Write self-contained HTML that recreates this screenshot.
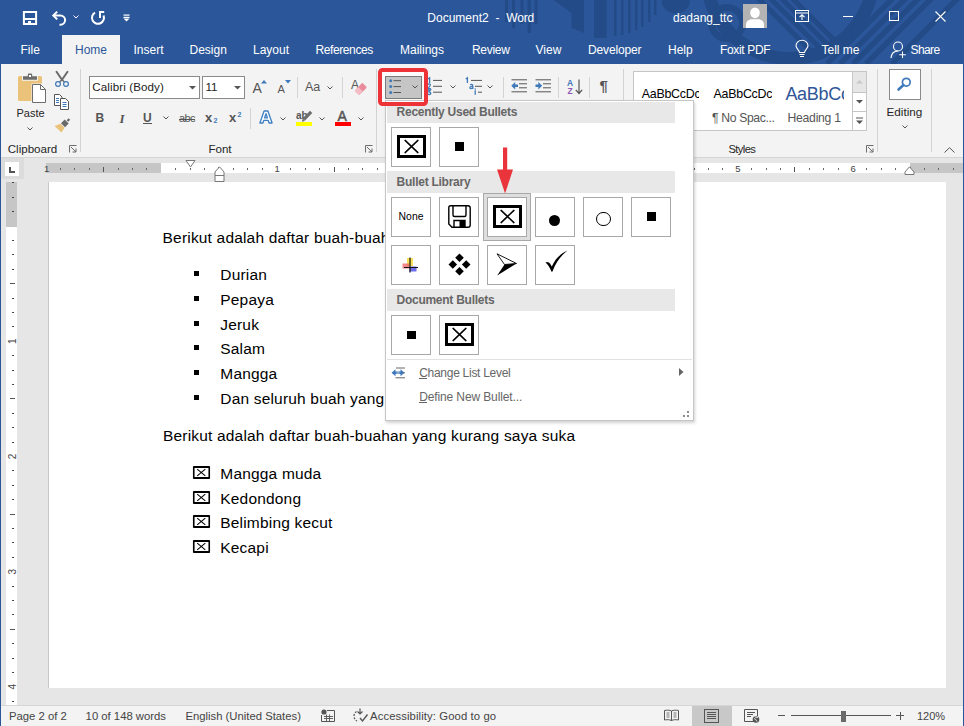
<!DOCTYPE html>
<html><head><meta charset="utf-8">
<style>
*{margin:0;padding:0;box-sizing:border-box}
html,body{width:964px;height:726px;overflow:hidden;background:#e6e6e6;font-family:"Liberation Sans",sans-serif;position:relative}
.a{position:absolute;white-space:nowrap;line-height:1}
svg{position:absolute;overflow:visible}
.tt{color:#fff;font-size:12px}
.rl{color:#262626;font-size:11.6px}
.st{color:#444;font-size:11.3px}
.doc{color:#000;font-size:15.5px;letter-spacing:0.18px}
.hd{color:#666;font-size:12px;font-weight:bold;letter-spacing:-0.26px;margin-top:0.1px}
.bx{width:16.4px;height:13px;border-top:2px solid #000;border-bottom:2px solid #000;border-left:1.6px solid #000;border-right:1.6px solid #000;background:#fff}
.bx::after{content:"";position:absolute;left:2.2px;top:1.1px;width:8px;height:7px;background:linear-gradient(to top right,transparent calc(50% - 0.6px),#000 calc(50% - 0.6px),#000 calc(50% + 0.6px),transparent calc(50% + 0.6px)),linear-gradient(to top left,transparent calc(50% - 0.6px),#000 calc(50% - 0.6px),#000 calc(50% + 0.6px),transparent calc(50% + 0.6px))}
.cell{position:absolute;width:40px;height:40px;border:1px solid #a8a8a8;background:#fff}
</style></head><body>
<!-- ============ TITLE BAR ============ -->
<div class="a" style="left:0;top:0;width:964px;height:64px;background:#2b579a"></div>
<svg style="left:0;top:0" width="964" height="64" viewBox="0 0 964 64">
 <defs>
  <clipPath id="cin"><circle cx="790" cy="-25" r="77"/></clipPath>
  <clipPath id="cout"><path d="M0 -200 H964 V64 H0 Z M880 -25 A90 90 0 1 0 700 -25 A90 90 0 1 0 880 -25 Z" clip-rule="evenodd"/></clipPath>
 </defs>
 <g fill="#234b88">
  <rect x="505" y="0" width="3" height="22"/><rect x="512" y="0" width="3" height="28"/><rect x="520.5" y="0" width="3" height="24"/><rect x="527.5" y="0" width="3.5" height="33"/><rect x="534.5" y="0" width="3" height="24"/>
  <polygon points="553.5,0 584,0 584,33 571.5,28 571.5,13"/>
  <rect x="594" y="0" width="12.7" height="38"/>
  <rect x="614" y="0" width="2.5" height="36"/><rect x="621" y="0" width="2.5" height="35"/><rect x="628" y="0" width="2.5" height="33"/><rect x="635" y="0" width="2.5" height="30"/><rect x="641" y="0" width="2.5" height="27"/><rect x="648" y="0" width="2.5" height="22"/><rect x="654" y="0" width="2.5" height="15"/>
  <path d="M661.5 0 A14.2 13.5 0 0 0 690 0 Z"/>
 </g>
 <g fill="none" stroke="#234b88">
  <circle cx="790" cy="-25" r="83.5" stroke-width="13"/>
  <circle cx="727" cy="23" r="15.5" stroke-width="7"/>
  <g clip-path="url(#cin)" stroke-width="5"><path d="M770 -2 L840 68 M781 -2 L851 68 M792 -2 L862 68 M758 -2 L828 68"/></g>
  <g clip-path="url(#cout)" stroke-width="5.5"><path d="M893 -2 L827 64 M906 -2 L840 64 M919 -2 L853 64 M932 -2 L866 64 M958 -2 L892 64"/></g>
 </g>
</svg>
<!-- QAT icons -->
<svg style="left:22px;top:10px" width="16" height="16" viewBox="0 0 16 16">
 <path d="M1.9 1.9 H14.1 V14.1 H1.9 Z" fill="none" stroke="#fff" stroke-width="2"/>
 <rect x="1" y="8" width="14" height="2" fill="#fff"/>
 <rect x="6" y="11" width="3" height="3.5" fill="#fff"/>
</svg>
<svg style="left:51px;top:10px" width="17" height="16" viewBox="0 0 17 16">
 <path d="M2.5 5.5 H9.5 A4.6 4.6 0 0 1 9.5 14.7 H8.5" fill="none" stroke="#fff" stroke-width="2"/>
 <path d="M6.2 1.6 L2.3 5.5 L6.2 9.4" fill="none" stroke="#fff" stroke-width="2"/>
</svg>
<svg style="left:73px;top:15px" width="6" height="4" viewBox="0 0 6 4"><path d="M0.5 0.5 L3 3 L5.5 0.5" fill="none" stroke="#fff" stroke-width="1"/></svg>
<svg style="left:90px;top:10px" width="16" height="16" viewBox="0 0 16 16">
 <path d="M5 2.6 A6 6 0 1 0 13.5 5.5" fill="none" stroke="#fff" stroke-width="2"/>
 <path d="M10 8 V2 H14.2" fill="none" stroke="#fff" stroke-width="2"/>
</svg>
<svg style="left:123px;top:14px" width="7" height="8" viewBox="0 0 7 8"><rect x="0.5" y="0.5" width="6" height="1.2" fill="#fff"/><rect x="0.5" y="2.8" width="6" height="1.2" fill="#fff"/><path d="M0.5 4.5 H6.5 L3.5 7.5 Z" fill="#fff"/></svg>

<div class="a tt" style="left:427.3px;top:12px">Document2</div><div class="a tt" style="left:495.5px;top:12px">-</div><div class="a tt" style="left:506.3px;top:12px;letter-spacing:-0.2px">Word</div>
<div class="a tt" style="left:673px;top:11.7px">dadang_ttc</div>
<!-- avatar -->
<div class="a" style="left:743px;top:4px;width:24px;height:24px;background:#b3b3b3;overflow:hidden">
 <svg style="left:0;top:0" width="24" height="24" viewBox="0 0 24 24"><ellipse cx="12" cy="8.8" rx="4.8" ry="5.4" fill="#fff"/><path d="M3 24 V21 C3 17.5 5.5 15.3 9 15.3 H15 C18.5 15.3 21 17.5 21 21 V24 Z" fill="#fff"/></svg>
</div>
<!-- window controls -->
<svg style="left:795px;top:10px" width="14" height="12" viewBox="0 0 14 12"><rect x="0.5" y="0.5" width="13" height="11" fill="none" stroke="#fff" stroke-width="1"/><path d="M0.5 3 H13.5" stroke="#fff" stroke-width="1"/><path d="M7 10 V5 M4.5 7.2 L7 4.8 L9.5 7.2" fill="none" stroke="#fff" stroke-width="1.1"/></svg>
<div class="a" style="left:843px;top:15.5px;width:10px;height:1px;background:#fff"></div>
<div class="a" style="left:889px;top:11px;width:10px;height:10px;border:1px solid #fff"></div>
<svg style="left:935px;top:11px" width="11" height="11" viewBox="0 0 11 11"><path d="M0.5 0.5 L10.5 10.5 M10.5 0.5 L0.5 10.5" stroke="#fff" stroke-width="1.1"/></svg>

<!-- ============ TABS ============ -->
<div class="a" style="left:62px;top:35px;width:58px;height:30px;background:#f3f3f3"></div>
<div class="a tt" style="left:20.5px;top:43.6px">File</div>
<div class="a tt" style="left:75px;top:43.6px;color:#2b579a">Home</div>
<div class="a tt" style="left:133.5px;top:43.6px">Insert</div>
<div class="a tt" style="left:189.5px;top:43.6px">Design</div>
<div class="a tt" style="left:253px;top:43.6px">Layout</div>
<div class="a tt" style="left:315.5px;top:43.6px;letter-spacing:-0.4px">References</div>
<div class="a tt" style="left:400px;top:43.6px">Mailings</div>
<div class="a tt" style="left:472px;top:43.6px;letter-spacing:-0.3px">Review</div>
<div class="a tt" style="left:535.5px;top:43.6px">View</div>
<div class="a tt" style="left:588px;top:43.6px;letter-spacing:-0.15px">Developer</div>
<div class="a tt" style="left:668px;top:43.6px">Help</div>
<div class="a tt" style="left:720px;top:43.6px;letter-spacing:-0.35px">Foxit PDF</div>
<svg style="left:795px;top:40px" width="14" height="19" viewBox="0 0 14 19"><path d="M4.5 12.5 C4.5 10 1 8.5 1 5.8 A6 5.5 0 0 1 13 5.8 C13 8.5 9.5 10 9.5 12.5 Z" fill="none" stroke="#fff" stroke-width="1.1"/><path d="M4.5 14.5 H9.5 M5 16.5 H9" stroke="#fff" stroke-width="1.1"/></svg>
<div class="a tt" style="left:821.5px;top:43.6px">Tell me</div>
<svg style="left:890px;top:41px" width="17" height="18" viewBox="0 0 17 18"><circle cx="8" cy="5.5" r="4.5" fill="none" stroke="#fff" stroke-width="1.1"/><path d="M1 17 C1.5 12 4 10 8 10" fill="none" stroke="#fff" stroke-width="1.1"/><path d="M12.5 10.5 V17 M9.2 13.8 H15.8" stroke="#fff" stroke-width="1.1"/></svg>
<div class="a tt" style="left:910.5px;top:43.6px;letter-spacing:-0.6px">Share</div>

<!-- window borders -->
<div class="a" style="left:0;top:64px;width:1px;height:662px;background:#2b579a"></div>
<div class="a" style="left:963px;top:64px;width:1px;height:662px;background:#2b579a"></div>

<!-- ============ RIBBON ============ -->
<div class="a" style="left:1px;top:64px;width:962px;height:94px;background:#f3f3f3;border-bottom:1px solid #d4d4d4"></div>
<!-- Clipboard -->
<svg style="left:12px;top:68px" width="38" height="38" viewBox="0 0 38 38">
 <rect x="6" y="8" width="24" height="25" rx="1.5" fill="#eac27a"/>
 <path d="M10 7.5 H15 V6.5 Q15 4.8 16.7 4.8 H19.3 Q21 4.8 21 6.5 V7.5 H26 V12.8 H10 Z" fill="#f3f3f3"/>
 <path d="M11 8.2 H15.8 V6.8 Q15.8 5.6 17 5.6 H19 Q20.2 5.6 20.2 6.8 V8.2 H25 V11.8 H11 Z" fill="#6d6d6d"/>
 <rect x="17" y="7" width="2" height="2" fill="#fff"/>
 <path d="M19.5 15.5 H29.5 L35 21 V35.5 H19.5 Z" fill="#f3f3f3"/>
 <path d="M20.5 16.5 H28.5 L33.5 21.5 V34.5 H20.5 Z" fill="#fff" stroke="#6d6d6d" stroke-width="1"/>
 <path d="M28.5 16.5 V21.5 H33.5" fill="none" stroke="#6d6d6d" stroke-width="1"/>
</svg>
<div class="a rl" style="left:16.5px;top:108.3px;font-size:11px">Paste</div>
<svg style="left:27px;top:127px" width="6" height="4" viewBox="0 0 6 4"><path d="M0.5 0.5 L3 3 L5.5 0.5" fill="none" stroke="#555" stroke-width="1"/></svg>
<svg style="left:54px;top:71px" width="16" height="16" viewBox="0 0 16 16">
 <path d="M2.5 0.8 L8 8.8 M13.5 0.8 L8 8.8" stroke="#6a6a6a" stroke-width="2" stroke-linecap="round"/>
 <path d="M8 8.8 L5.6 11 M8 8.8 L10.4 11" stroke="#6a6a6a" stroke-width="1.5"/>
 <circle cx="4" cy="13" r="2.4" fill="none" stroke="#3f79b9" stroke-width="1.2"/>
 <circle cx="12" cy="13" r="2.4" fill="none" stroke="#3f79b9" stroke-width="1.2"/>
</svg>
<svg style="left:54px;top:94px" width="16" height="16" viewBox="0 0 16 16">
 <path d="M0.5 0.5 H5.5 L8 3 V11.5 H0.5 Z" fill="#fff" stroke="#555" stroke-width="1"/>
 <path d="M6.5 4.5 H11.5 L14.5 7.5 V15.5 H6.5 Z" fill="#fff" stroke="#555" stroke-width="1"/>
 <path d="M2 4.5 H5 M2 6.5 H5 M2 8.5 H5 M8.5 8.5 H12.5 M8.5 10.5 H12.5 M8.5 12.5 H12.5" stroke="#3f79b9" stroke-width="1"/>
</svg>
<svg style="left:54px;top:117px" width="17" height="16" viewBox="0 0 17 16">
 <path d="M12.6 3.2 L14.6 1.2 L16.2 2.8 L14.2 4.8 Z" fill="#6a6a6a"/>
 <path d="M7 6.2 L10.7 2.5 L14.7 6.5 L11 10.2 Z" fill="#6a6a6a"/>
 <path d="M6.5 6.7 L10.5 10.7 L7.5 15.5 L0.5 9 Z" fill="#eac27a"/>
</svg>
<div class="a rl" style="left:7.7px;top:143.3px">Clipboard</div>
<svg style="left:69px;top:145px" width="8" height="8" viewBox="0 0 8 8"><path d="M0.5 7.5 V0.5 H7.5 M2 2 L7 7 M7 3.5 V7 H3.5" fill="none" stroke="#6d6d6d" stroke-width="1"/></svg>
<div class="a" style="left:80px;top:69px;width:1px;height:83px;background:#d3d3d3"></div>

<!-- Font group -->
<div class="a" style="left:89px;top:76px;width:111px;height:23px;background:#fff;border:1px solid #8a8a8a"></div>
<div class="a rl" style="left:92.3px;top:80.8px;font-size:11.6px;color:#222;letter-spacing:0.1px">Calibri (Body)</div>
<svg style="left:189px;top:86px" width="7" height="4" viewBox="0 0 7 4"><path d="M0 0 H7 L3.5 3.5 Z" fill="#555"/></svg>
<div class="a" style="left:202px;top:76px;width:43px;height:23px;background:#fff;border:1px solid #8a8a8a"></div>
<div class="a rl" style="left:205.5px;top:80.8px;font-size:11.6px;color:#222">11</div>
<svg style="left:234px;top:86px" width="7" height="4" viewBox="0 0 7 4"><path d="M0 0 H7 L3.5 3.5 Z" fill="#555"/></svg>
<div class="a" style="left:252.5px;top:81px;font-size:14px;color:#555">A</div>
<svg style="left:261px;top:79.5px" width="6" height="4" viewBox="0 0 6 4"><path d="M0 3.5 H6 L3 0 Z" fill="#3f79b9"/></svg>
<div class="a" style="left:277.5px;top:84px;font-size:11px;color:#555">A</div>
<svg style="left:284.5px;top:79.5px" width="6" height="4" viewBox="0 0 6 4"><path d="M0 0 H6 L3 3.5 Z" fill="#3f79b9"/></svg>
<div class="a" style="left:297px;top:77px;width:1px;height:21px;background:#d3d3d3"></div>
<div class="a" style="left:305px;top:81px;font-size:12.5px;color:#555">Aa</div>
<svg style="left:326.5px;top:85.5px" width="6" height="4" viewBox="0 0 6 4"><path d="M0.5 0.5 L3 3 L5.5 0.5" fill="none" stroke="#555" stroke-width="1"/></svg>
<div class="a" style="left:342px;top:77px;width:1px;height:21px;background:#d3d3d3"></div>
<div class="a" style="left:351px;top:79px;font-size:12px;color:#555">A</div>
<svg style="left:352px;top:81px" width="15" height="14" viewBox="0 0 15 14"><path d="M3.5 9 L9.5 2.5 Q10.3 1.7 11.1 2.5 L14.2 5.6 Q15 6.4 14.2 7.2 L8 13.3 Q7.2 14 6.4 13.3 L3.5 10.5 Q2.8 9.8 3.5 9 Z" fill="#e88b9a"/><path d="M3.5 9 L6.3 6 L10.8 10.5 L8 13.3 Q7.2 14 6.4 13.3 L3.5 10.5 Q2.8 9.8 3.5 9 Z" fill="#f5bcc5"/></svg>

<div class="a" style="left:95.5px;top:112px;font-size:12px;font-weight:bold;color:#555">B</div>
<div class="a" style="left:119.5px;top:111.5px;font-size:13px;font-style:italic;font-weight:bold;color:#555;font-family:'Liberation Serif'">I</div>
<div class="a" style="left:143px;top:112px;font-size:12px;color:#555;font-weight:bold">U</div>
<div class="a" style="left:143px;top:123px;width:9px;height:1px;background:#555"></div>
<svg style="left:163px;top:116px" width="6" height="4" viewBox="0 0 6 4"><path d="M0.5 0.5 L3 3 L5.5 0.5" fill="none" stroke="#555" stroke-width="1"/></svg>
<div class="a" style="left:179px;top:113px;font-size:11px;color:#555;letter-spacing:-0.6px">abc</div>
<div class="a" style="left:179px;top:118.5px;width:16px;height:1px;background:#555"></div>
<div class="a" style="left:205px;top:110.5px;font-size:13px;font-weight:bold;color:#555">x</div>
<div class="a" style="left:213.5px;top:117px;font-size:7px;font-weight:bold;color:#3f79b9">2</div>
<div class="a" style="left:229px;top:110.5px;font-size:13px;font-weight:bold;color:#555">x</div>
<div class="a" style="left:237.5px;top:111px;font-size:7px;font-weight:bold;color:#3f79b9">2</div>
<div class="a" style="left:250px;top:108px;width:1px;height:21px;background:#d3d3d3"></div>
<svg style="left:259px;top:110px" width="14" height="14" viewBox="0 0 14 14"><path d="M0.9 13 L5.1 1 H8.9 L13.1 13 H10.1 L9.2 10.3 H4.8 L3.9 13 Z M5.6 7.8 H8.4 L7 3.6 Z" fill="#fff" fill-rule="evenodd" stroke="#3f7fc2" stroke-width="1.3" stroke-linejoin="round"/></svg>
<svg style="left:279.5px;top:116.5px" width="6" height="4" viewBox="0 0 6 4"><path d="M0.5 0.5 L3 3 L5.5 0.5" fill="none" stroke="#555" stroke-width="1"/></svg>
<div class="a" style="left:296px;top:110.5px;font-size:10px;font-weight:bold;color:#555">ab</div>
<svg style="left:300px;top:110px" width="13" height="13" viewBox="0 0 13 13"><path d="M10 0.8 L12.3 3 L5 10.5 L2.7 8.3 Z" fill="#6d6d6d"/><path d="M2.7 8.3 L5 10.5 L2 12 Z" fill="#6d6d6d"/></svg>
<div class="a" style="left:296px;top:122px;width:16px;height:4px;background:#ffff00"></div>
<svg style="left:319px;top:116.5px" width="6" height="4" viewBox="0 0 6 4"><path d="M0.5 0.5 L3 3 L5.5 0.5" fill="none" stroke="#555" stroke-width="1"/></svg>
<div class="a" style="left:337.5px;top:109.3px;font-size:14px;color:#555;-webkit-text-stroke:0.5px #555">A</div>
<div class="a" style="left:335px;top:122px;width:16px;height:4px;background:#ff0000"></div>
<svg style="left:358px;top:116.5px" width="6" height="4" viewBox="0 0 6 4"><path d="M0.5 0.5 L3 3 L5.5 0.5" fill="none" stroke="#555" stroke-width="1"/></svg>
<div class="a rl" style="left:208.6px;top:143.2px;letter-spacing:-0.1px">Font</div>
<svg style="left:365px;top:145px" width="8" height="8" viewBox="0 0 8 8"><path d="M0.5 7.5 V0.5 H7.5 M2 2 L7 7 M7 3.5 V7 H3.5" fill="none" stroke="#6d6d6d" stroke-width="1"/></svg>
<div class="a" style="left:376px;top:69px;width:1px;height:83px;background:#d3d3d3"></div>

<!-- Paragraph group -->
<div class="a" style="left:381px;top:71px;width:44px;height:32px;background:#fbfbfb;border-top:1px solid #bdbdbd"></div>
<div class="a" style="left:385px;top:76px;width:37px;height:23px;background:#c5c5c5;border:1px solid #7a7a7a"></div>
<svg style="left:389px;top:79px" width="28" height="15" viewBox="0 0 28 15">
 <circle cx="1.7" cy="1.7" r="1.5" fill="#3f79b9"/><circle cx="1.7" cy="7.6" r="1.5" fill="#3f79b9"/><circle cx="1.7" cy="13.5" r="1.5" fill="#3f79b9"/>
 <path d="M4.5 1.7 H12 M4.5 7.6 H12 M4.5 13.5 H12" stroke="#555" stroke-width="1"/>
 <path d="M23.5 6.5 L26 9 L28.5 6.5" fill="none" stroke="#555" stroke-width="1"/>
</svg>
<svg style="left:427px;top:77px" width="30" height="18" viewBox="0 0 30 18">
 <g fill="none" stroke="#3f79b9" stroke-width="1.3">
  <path d="M1 2 L2.6 0.8 V6"/>
  <path d="M0.8 7.6 Q2 6.4 3.2 7.3 Q3.8 8.2 0.7 11.6 H3.9"/>
  <path d="M0.8 13 H3.5 L1.8 14.8 Q3.9 14.8 3.7 16.6 Q3 18 0.7 17.2"/>
 </g>
 <path d="M6 3.4 H15 M6 9.3 H15 M6 15.2 H15" stroke="#555" stroke-width="1"/>
 <path d="M23.5 8.5 L26 11 L28.5 8.5" fill="none" stroke="#555" stroke-width="1"/>
</svg>
<svg style="left:465px;top:77px" width="30" height="18" viewBox="0 0 30 18">
 <g fill="none" stroke="#3f79b9" stroke-width="1.3">
  <path d="M0.8 2 L2.4 0.8 V6"/>
  <path d="M5.2 7.8 Q7.8 6.8 7.8 9 V12 M7.8 9.6 Q4.6 9.2 4.9 11 Q5.5 12.3 7.8 11"/>
  <path d="M10.2 13.2 V17.8"/>
 </g>
 <rect x="9.6" y="11.4" width="1.3" height="1.2" fill="#3f79b9"/>
 <path d="M6 3.4 H17 M10 9.3 H17 M13 15.2 H17" stroke="#555" stroke-width="1"/>
 <path d="M22.5 8.5 L25 11 L27.5 8.5" fill="none" stroke="#555" stroke-width="1"/>
</svg>
<div class="a" style="left:503px;top:77px;width:1px;height:21px;background:#d3d3d3"></div>
<svg style="left:511px;top:79px" width="17" height="14" viewBox="0 0 17 14">
 <path d="M0.5 0.8 H16 M8 4.8 H16 M8 8.8 H16 M0.5 12.8 H16" stroke="#555" stroke-width="1"/>
 <path d="M0.3 6.8 L4.2 3 V5.5 H7 V8.1 H4.2 V10.6 Z" fill="#3f79b9"/>
</svg>
<svg style="left:535px;top:79px" width="17" height="14" viewBox="0 0 17 14">
 <path d="M0.5 0.8 H16 M8 4.8 H16 M8 8.8 H16 M0.5 12.8 H16" stroke="#555" stroke-width="1"/>
 <path d="M7.2 6.8 L3.3 3 V5.5 H0.5 V8.1 H3.3 V10.6 Z" fill="#3f79b9"/>
</svg>
<div class="a" style="left:558px;top:77px;width:1px;height:21px;background:#d3d3d3"></div>
<div class="a" style="left:567px;top:78.5px;font-size:8.5px;font-weight:bold;color:#3f79b9">A</div>
<div class="a" style="left:567.5px;top:86.5px;font-size:8.5px;font-weight:bold;color:#8e55b5">Z</div>
<svg style="left:575px;top:79px" width="8" height="16" viewBox="0 0 8 16"><path d="M4 0.5 V14.5 M0.8 10.8 L4 14.5 L7.2 10.8" fill="none" stroke="#555" stroke-width="1.2"/></svg>
<div class="a" style="left:589px;top:77px;width:1px;height:21px;background:#d3d3d3"></div>
<div class="a" style="left:599.5px;top:78px;font-size:15px;font-weight:bold;color:#555">¶</div>
<div class="a" style="left:623px;top:69px;width:1px;height:83px;background:#d3d3d3"></div>

<!-- Styles group -->
<div class="a" style="left:633px;top:71px;width:234px;height:60px;background:#fff;border:1px solid #c6c6c6"></div>
<div class="a" style="left:641px;top:80px;width:58px;height:20px;overflow:hidden"><div class="a" style="left:0.8px;top:7.6px;font-size:12.4px;color:#000;letter-spacing:-0.25px">AaBbCcDc</div></div>
<div class="a" style="left:713px;top:80px;width:59px;height:20px;overflow:hidden"><div class="a" style="left:0.6px;top:7.6px;font-size:12.4px;color:#000;letter-spacing:-0.25px">AaBbCcDc</div></div>
<div class="a" style="left:712px;top:112.2px;font-size:12.2px;color:#555;letter-spacing:-0.35px">¶ No Spac...</div>
<div class="a" style="left:785px;top:80px;width:59px;height:24px;overflow:hidden"><div class="a" style="left:0.4px;top:4.6px;font-size:18px;color:#2f5597;letter-spacing:-0.3px">AaBbCc</div></div>
<div class="a" style="left:787.5px;top:112.2px;font-size:12.2px;color:#555;letter-spacing:-0.25px">Heading 1</div>
<div class="a" style="left:852px;top:71px;width:15px;height:60px;border:1px solid #c6c6c6;background:#fff"></div>
<div class="a" style="left:853px;top:72px;width:13px;height:20px;background:#e6e6e6"></div>
<div class="a" style="left:853px;top:92px;width:13px;height:1px;background:#c6c6c6"></div>
<div class="a" style="left:853px;top:111px;width:13px;height:1px;background:#c6c6c6"></div>
<svg style="left:856px;top:80px" width="7" height="4" viewBox="0 0 7 4"><path d="M0 3.5 H7 L3.5 0 Z" fill="#c8c8c8"/></svg>
<svg style="left:856px;top:100px" width="7" height="4" viewBox="0 0 7 4"><path d="M0 0 H7 L3.5 3.5 Z" fill="#555"/></svg>
<svg style="left:856px;top:117px" width="7" height="8" viewBox="0 0 7 8"><path d="M0 1 H7" stroke="#555" stroke-width="1"/><path d="M0 3.5 H7 L3.5 7 Z" fill="#555"/></svg>
<div class="a rl" style="left:728.4px;top:143.8px;letter-spacing:-0.6px;font-size:11.2px">Styles</div>
<svg style="left:866px;top:145px" width="8" height="8" viewBox="0 0 8 8"><path d="M0.5 7.5 V0.5 H7.5 M2 2 L7 7 M7 3.5 V7 H3.5" fill="none" stroke="#6d6d6d" stroke-width="1"/></svg>
<div class="a" style="left:877px;top:69px;width:1px;height:83px;background:#d3d3d3"></div>

<!-- Editing -->
<div class="a" style="left:889px;top:69px;width:32px;height:31px;background:#fff;border:1px solid #8a8a8a"></div>
<svg style="left:897px;top:77px" width="15" height="14" viewBox="0 0 15 14"><circle cx="9.3" cy="5.2" r="3.9" fill="none" stroke="#3f79b9" stroke-width="1.7"/><path d="M6.5 8 L1.5 12.5" stroke="#3f79b9" stroke-width="2.6" stroke-linecap="round"/></svg>
<div class="a rl" style="left:886.5px;top:106.3px;font-size:11.7px">Editing</div>
<svg style="left:902px;top:125px" width="6" height="4" viewBox="0 0 6 4"><path d="M0.5 0.5 L3 3 L5.5 0.5" fill="none" stroke="#555" stroke-width="1"/></svg>
<div class="a" style="left:931px;top:69px;width:1px;height:83px;background:#d3d3d3"></div>
<svg style="left:944px;top:147px" width="11" height="6" viewBox="0 0 11 6"><path d="M0.5 5.5 L5.5 0.7 L10.5 5.5" fill="none" stroke="#555" stroke-width="1"/></svg>


<!-- ============ RULER / DOC ============ -->
<!-- tab selector -->
<div class="a" style="left:1px;top:158px;width:23px;height:21px;background:#dcdcdc"></div>
<div class="a" style="left:5px;top:162px;width:14px;height:14px;background:#fff"></div>
<div class="a" style="left:9px;top:167px;width:2px;height:6px;background:#555"></div>
<div class="a" style="left:9px;top:171px;width:6px;height:2px;background:#555"></div>
<!-- horizontal ruler -->
<div class="a" style="left:46px;top:163px;width:115px;height:10px;background:#c6c6c6"></div>
<div class="a" style="left:161px;top:163px;width:749px;height:10px;background:#fff"></div>
<div class="a" style="left:910px;top:163px;width:53px;height:10px;background:#c6c6c6"></div>
<svg style="left:0;top:158px" width="964" height="25" viewBox="0 0 964 25" id="hruler"><text x="46.7" y="13.6" font-size="9.5" font-family="Liberation Sans" fill="#444" text-anchor="middle">1</text><rect x="60" y="10" width="1" height="2" fill="#666"/><rect x="74" y="10" width="1" height="2" fill="#666"/><rect x="89" y="10" width="1" height="2" fill="#666"/><rect x="103" y="9" width="1" height="5" fill="#555"/><rect x="118" y="10" width="1" height="2" fill="#666"/><rect x="132" y="10" width="1" height="2" fill="#666"/><rect x="146" y="10" width="1" height="2" fill="#666"/><rect x="175" y="10" width="1" height="2" fill="#666"/><rect x="190" y="10" width="1" height="2" fill="#666"/><rect x="204" y="10" width="1" height="2" fill="#666"/><rect x="218" y="9" width="1" height="5" fill="#555"/><rect x="233" y="10" width="1" height="2" fill="#666"/><rect x="247" y="10" width="1" height="2" fill="#666"/><rect x="262" y="10" width="1" height="2" fill="#666"/><text x="277.1" y="13.6" font-size="9.5" font-family="Liberation Sans" fill="#444" text-anchor="middle">1</text><rect x="290" y="10" width="1" height="2" fill="#666"/><rect x="305" y="10" width="1" height="2" fill="#666"/><rect x="319" y="10" width="1" height="2" fill="#666"/><rect x="334" y="9" width="1" height="5" fill="#555"/><rect x="348" y="10" width="1" height="2" fill="#666"/><rect x="362" y="10" width="1" height="2" fill="#666"/><rect x="377" y="10" width="1" height="2" fill="#666"/><text x="392.3" y="13.6" font-size="9.5" font-family="Liberation Sans" fill="#444" text-anchor="middle">2</text><rect x="406" y="10" width="1" height="2" fill="#666"/><rect x="420" y="10" width="1" height="2" fill="#666"/><rect x="434" y="10" width="1" height="2" fill="#666"/><rect x="449" y="9" width="1" height="5" fill="#555"/><rect x="463" y="10" width="1" height="2" fill="#666"/><rect x="478" y="10" width="1" height="2" fill="#666"/><rect x="492" y="10" width="1" height="2" fill="#666"/><text x="507.5" y="13.6" font-size="9.5" font-family="Liberation Sans" fill="#444" text-anchor="middle">3</text><rect x="521" y="10" width="1" height="2" fill="#666"/><rect x="535" y="10" width="1" height="2" fill="#666"/><rect x="550" y="10" width="1" height="2" fill="#666"/><rect x="564" y="9" width="1" height="5" fill="#555"/><rect x="578" y="10" width="1" height="2" fill="#666"/><rect x="593" y="10" width="1" height="2" fill="#666"/><rect x="607" y="10" width="1" height="2" fill="#666"/><text x="622.7" y="13.6" font-size="9.5" font-family="Liberation Sans" fill="#444" text-anchor="middle">4</text><rect x="636" y="10" width="1" height="2" fill="#666"/><rect x="650" y="10" width="1" height="2" fill="#666"/><rect x="665" y="10" width="1" height="2" fill="#666"/><rect x="679" y="9" width="1" height="5" fill="#555"/><rect x="694" y="10" width="1" height="2" fill="#666"/><rect x="708" y="10" width="1" height="2" fill="#666"/><rect x="722" y="10" width="1" height="2" fill="#666"/><text x="737.9" y="13.6" font-size="9.5" font-family="Liberation Sans" fill="#444" text-anchor="middle">5</text><rect x="751" y="10" width="1" height="2" fill="#666"/><rect x="766" y="10" width="1" height="2" fill="#666"/><rect x="780" y="10" width="1" height="2" fill="#666"/><rect x="794" y="9" width="1" height="5" fill="#555"/><rect x="809" y="10" width="1" height="2" fill="#666"/><rect x="823" y="10" width="1" height="2" fill="#666"/><rect x="838" y="10" width="1" height="2" fill="#666"/><text x="853.1" y="13.6" font-size="9.5" font-family="Liberation Sans" fill="#444" text-anchor="middle">6</text><rect x="866" y="10" width="1" height="2" fill="#666"/><rect x="881" y="10" width="1" height="2" fill="#666"/><rect x="895" y="10" width="1" height="2" fill="#666"/><rect x="910" y="9" width="1" height="5" fill="#555"/><rect x="924" y="10" width="1" height="2" fill="#666"/><rect x="938" y="10" width="1" height="2" fill="#666"/><rect x="953" y="10" width="1" height="2" fill="#666"/><path d="M186 2.5 H195 L190.5 9 Z" fill="#fff" stroke="#777" stroke-width="1"/><path d="M215 14 L219.5 8.8 L224 14 V23.5 H215 Z" fill="#fff" stroke="#777" stroke-width="1"/><path d="M215 17.5 H224" stroke="#777" stroke-width="1"/><path d="M905 14 L909.5 8.8 L914 14 V16.5 H905 Z" fill="#fff" stroke="#777" stroke-width="1"/></svg>
<!-- vertical ruler -->
<div class="a" style="left:6px;top:182px;width:11px;height:45px;background:#c6c6c6"></div>
<div class="a" style="left:6px;top:227px;width:11px;height:478px;background:#fff"></div>
<svg style="left:0;top:0" width="20" height="726" viewBox="0 0 20 726" id="vruler"><rect x="12" y="182" width="2" height="1" fill="#444"/><rect x="12" y="197" width="2" height="1" fill="#444"/><rect x="12" y="211" width="2" height="1" fill="#444"/><rect x="12" y="240" width="2" height="1" fill="#444"/><rect x="12" y="254" width="2" height="1" fill="#444"/><rect x="12" y="269" width="2" height="1" fill="#444"/><rect x="10" y="283" width="5" height="1" fill="#555"/><rect x="12" y="298" width="2" height="1" fill="#444"/><rect x="12" y="312" width="2" height="1" fill="#444"/><rect x="12" y="326" width="2" height="1" fill="#444"/><text x="0" y="0" font-size="10" font-family="Liberation Sans" fill="#444" text-anchor="middle" transform="translate(16 341.2) rotate(-90)">1</text><rect x="12" y="355" width="2" height="1" fill="#444"/><rect x="12" y="370" width="2" height="1" fill="#444"/><rect x="12" y="384" width="2" height="1" fill="#444"/><rect x="10" y="398" width="5" height="1" fill="#555"/><rect x="12" y="413" width="2" height="1" fill="#444"/><rect x="12" y="427" width="2" height="1" fill="#444"/><rect x="12" y="442" width="2" height="1" fill="#444"/><text x="0" y="0" font-size="10" font-family="Liberation Sans" fill="#444" text-anchor="middle" transform="translate(16 456.4) rotate(-90)">2</text><rect x="12" y="470" width="2" height="1" fill="#444"/><rect x="12" y="485" width="2" height="1" fill="#444"/><rect x="12" y="499" width="2" height="1" fill="#444"/><rect x="10" y="514" width="5" height="1" fill="#555"/><rect x="12" y="528" width="2" height="1" fill="#444"/><rect x="12" y="542" width="2" height="1" fill="#444"/><rect x="12" y="557" width="2" height="1" fill="#444"/><text x="0" y="0" font-size="10" font-family="Liberation Sans" fill="#444" text-anchor="middle" transform="translate(16 571.6) rotate(-90)">3</text><rect x="12" y="586" width="2" height="1" fill="#444"/><rect x="12" y="600" width="2" height="1" fill="#444"/><rect x="12" y="614" width="2" height="1" fill="#444"/><rect x="10" y="629" width="5" height="1" fill="#555"/><rect x="12" y="643" width="2" height="1" fill="#444"/><rect x="12" y="658" width="2" height="1" fill="#444"/><rect x="12" y="672" width="2" height="1" fill="#444"/><text x="0" y="0" font-size="10" font-family="Liberation Sans" fill="#444" text-anchor="middle" transform="translate(16 686.8) rotate(-90)">4</text><rect x="12" y="701" width="2" height="1" fill="#444"/></svg>
<!-- page -->
<div class="a" style="left:48px;top:182px;width:898px;height:506px;background:#fff;border-left:1px solid #c8c8c8"></div>
<div class="a doc" style="left:162.6px;top:230.35px">Berikut adalah daftar buah-buahan yang saya suka</div>
<div class="a" style="left:194px;top:271px;width:5px;height:5px;background:#000"></div>
<div class="a doc" style="left:220.3px;top:267.05px">Durian</div>
<div class="a" style="left:194px;top:295.75px;width:5px;height:5px;background:#000"></div>
<div class="a doc" style="left:220.3px;top:291.80px">Pepaya</div>
<div class="a" style="left:194px;top:320.5px;width:5px;height:5px;background:#000"></div>
<div class="a doc" style="left:220.3px;top:316.55px">Jeruk</div>
<div class="a" style="left:194px;top:345.25px;width:5px;height:5px;background:#000"></div>
<div class="a doc" style="left:220.3px;top:341.30px">Salam</div>
<div class="a" style="left:194px;top:370px;width:5px;height:5px;background:#000"></div>
<div class="a doc" style="left:220.3px;top:366.05px">Mangga</div>
<div class="a" style="left:194px;top:394.75px;width:5px;height:5px;background:#000"></div>
<div class="a doc" style="left:220.3px;top:390.80px">Dan seluruh buah yang manis</div>
<div class="a doc" style="left:163px;top:427.6px">Berikut adalah daftar buah-buahan yang kurang saya suka</div>
<svg style="left:193.3px;top:466.0px" width="17" height="13" viewBox="0 0 17 13"><path d="M0.75 1 H16.25 V12 H0.75 Z" fill="none" stroke="#000" stroke-width="1.6"/><path d="M0.75 1 H16.25 M0.75 12 H16.25" stroke="#000" stroke-width="2"/><path d="M4.2 3.2 L12.3 9.8 M12.3 3.2 L4.2 9.8" stroke="#000" stroke-width="1.05"/></svg>
<div class="a doc" style="left:220.3px;top:466.25px">Mangga muda</div>
<svg style="left:193.3px;top:490.5px" width="17" height="13" viewBox="0 0 17 13"><path d="M0.75 1 H16.25 V12 H0.75 Z" fill="none" stroke="#000" stroke-width="1.6"/><path d="M0.75 1 H16.25 M0.75 12 H16.25" stroke="#000" stroke-width="2"/><path d="M4.2 3.2 L12.3 9.8 M12.3 3.2 L4.2 9.8" stroke="#000" stroke-width="1.05"/></svg>
<div class="a doc" style="left:220.3px;top:490.75px">Kedondong</div>
<svg style="left:193.3px;top:515.0px" width="17" height="13" viewBox="0 0 17 13"><path d="M0.75 1 H16.25 V12 H0.75 Z" fill="none" stroke="#000" stroke-width="1.6"/><path d="M0.75 1 H16.25 M0.75 12 H16.25" stroke="#000" stroke-width="2"/><path d="M4.2 3.2 L12.3 9.8 M12.3 3.2 L4.2 9.8" stroke="#000" stroke-width="1.05"/></svg>
<div class="a doc" style="left:220.3px;top:515.25px">Belimbing kecut</div>
<svg style="left:193.3px;top:539.5px" width="17" height="13" viewBox="0 0 17 13"><path d="M0.75 1 H16.25 V12 H0.75 Z" fill="none" stroke="#000" stroke-width="1.6"/><path d="M0.75 1 H16.25 M0.75 12 H16.25" stroke="#000" stroke-width="2"/><path d="M4.2 3.2 L12.3 9.8 M12.3 3.2 L4.2 9.8" stroke="#000" stroke-width="1.05"/></svg>
<div class="a doc" style="left:220.3px;top:539.75px">Kecapi</div>


<!-- ============ STATUS ============ -->
<div class="a" style="left:1px;top:705px;width:962px;height:21px;background:#f3f3f3;border-top:1px solid #d6d6d6"></div>
<div class="a st" style="left:9px;top:711px">Page 2 of 2</div>
<div class="a st" style="left:85.6px;top:711px">10 of 148 words</div>
<div class="a st" style="left:185.4px;top:711px">English (United States)</div>
<svg style="left:321px;top:709px" width="14" height="13" viewBox="0 0 14 13"><circle cx="3" cy="3" r="2.6" fill="#555"/><path d="M6 1.5 H13.5 V12.5 H0.5 V6" fill="none" stroke="#555" stroke-width="1"/><path d="M3 7.5 H12 M3 9.5 H12 M5.5 5.5 V12 M8.5 5.5 V12" stroke="#555" stroke-width="0.9"/></svg>
<svg style="left:352px;top:708px" width="17" height="15" viewBox="0 0 17 15"><path d="M4.5 3.5 A5.5 5.5 0 0 0 5 13" fill="none" stroke="#555" stroke-width="1.2" stroke-dasharray="2 1.3"/><path d="M8 0.5 V6 M5.5 3.5 L8 6 L10.5 3.5" fill="none" stroke="#555" stroke-width="1.2"/><path d="M8 10 L10.5 13 L15.5 6.5" fill="none" stroke="#555" stroke-width="1.4"/></svg>
<div class="a st" style="left:370px;top:711px;letter-spacing:0.1px">Accessibility: Good to go</div>
<svg style="left:664px;top:709px" width="15" height="13" viewBox="0 0 15 13"><path d="M7.5 2 C5.5 1 3 1 0.5 1.5 V11 C3 10.5 5.5 10.5 7.5 11.5 C9.5 10.5 12 10.5 14.5 11 V1.5 C12 1 9.5 1 7.5 2 Z M7.5 2 V12" fill="none" stroke="#555" stroke-width="1"/><path d="M2.5 4 H5.5 M2.5 6 H5.5 M2.5 8 H5.5 M9.5 4 H12.5 M9.5 6 H12.5 M9.5 8 H12.5" stroke="#555" stroke-width="0.8"/></svg>
<div class="a" style="left:692px;top:706px;width:40px;height:20px;background:#c8c8c8"></div>
<svg style="left:704px;top:709px" width="15" height="14" viewBox="0 0 15 14"><rect x="0.5" y="0.5" width="14" height="13" fill="none" stroke="#555" stroke-width="1"/><path d="M3 3.5 H12 M3 5.5 H12 M3 7.5 H12 M3 9.5 H12" stroke="#555" stroke-width="1"/></svg>
<svg style="left:744px;top:709px" width="16" height="14" viewBox="0 0 16 14"><path d="M10 12.5 H0.5 V0.5 H13.5 V7" fill="none" stroke="#555" stroke-width="1"/><path d="M3 3.5 H11 M3 5.5 H9 M3 7.5 H7" stroke="#555" stroke-width="1"/><circle cx="12" cy="10.5" r="3.3" fill="#555"/><path d="M10 9.5 Q12 10 13 12.5 M11 8 Q13 9 14 8.5" stroke="#fff" stroke-width="0.8" fill="none"/></svg>
<div class="a" style="left:778px;top:715px;width:7px;height:1px;background:#555"></div>
<div class="a" style="left:790.7px;top:715px;width:100px;height:1px;background:#555"></div>
<div class="a" style="left:841px;top:710.5px;width:5px;height:11px;background:#6a6a6a"></div>
<div class="a" style="left:896px;top:715px;width:8px;height:1px;background:#555"></div>
<div class="a" style="left:899.5px;top:711.5px;width:1px;height:8px;background:#555"></div>
<div class="a st" style="left:917px;top:711px;font-size:11px">120%</div>


<!-- ============ DROPDOWN ============ -->
<div class="a" style="left:385px;top:100px;width:309px;height:321px;background:#fff;border:1px solid #c6c6c6;box-shadow:1px 2px 3px rgba(0,0,0,0.18)"></div>
<div class="a" style="left:387px;top:101.5px;width:288px;height:21px;background:#e8e8e8"></div>
<div class="a hd" style="left:396.6px;top:106px">Recently Used Bullets</div>
<div class="cell" style="left:391px;top:127px"></div><div class="cell" style="left:439px;top:127px"></div>
<svg style="left:397px;top:135px" width="29" height="23" viewBox="0 0 29 23"><rect x="1.5" y="1.5" width="26" height="20" fill="none" stroke="#000" stroke-width="3"/><path d="M8.1 5.4 L20.9 17.6 M20.9 5.4 L8.1 17.6" stroke="#000" stroke-width="1.5" stroke-linecap="round"/></svg>
<div class="a" style="left:455px;top:142px;width:9px;height:9px;background:#000"></div>
<div class="a" style="left:387px;top:171.3px;width:288px;height:21.5px;background:#e8e8e8"></div>
<div class="a hd" style="left:396.6px;top:176px">Bullet Library</div>
<div class="a" style="left:483px;top:193px;width:48px;height:48px;background:#dedede;border:1px solid #a8a8a8"></div>
<div class="cell" style="left:391px;top:197px"></div>
<div class="cell" style="left:439px;top:197px"></div>
<div class="cell" style="left:487px;top:197px"></div>
<div class="cell" style="left:535px;top:197px"></div>
<div class="cell" style="left:583px;top:197px"></div>
<div class="cell" style="left:631px;top:197px"></div>
<div class="a" style="left:398.6px;top:212.3px;font-size:10.4px;color:#000">None</div>
<svg style="left:448px;top:205px" width="23" height="23" viewBox="0 0 23 23"><path d="M2.5 0.8 H20 Q22.2 0.8 22.2 3 V20 Q22.2 22.2 20 22.2 H4 L0.8 19 V2.5 Q0.8 0.8 2.5 0.8 Z" fill="none" stroke="#000" stroke-width="1.4"/><path d="M5 0.8 V10 Q5 11.5 6.5 11.5 H16.5 Q18 11.5 18 10 V0.8" fill="none" stroke="#000" stroke-width="1.4"/><path d="M6 22.2 V15.5 H17 V22.2" fill="none" stroke="#000" stroke-width="1.4"/><rect x="11.5" y="16" width="5.5" height="6.2" fill="#000"/></svg>
<svg style="left:493px;top:205px" width="29" height="23" viewBox="0 0 29 23"><rect x="1.5" y="1.5" width="26" height="20" fill="none" stroke="#000" stroke-width="3"/><path d="M8.1 5.4 L20.9 17.6 M20.9 5.4 L8.1 17.6" stroke="#000" stroke-width="1.5" stroke-linecap="round"/></svg>
<div class="a" style="left:548.8px;top:215px;width:11px;height:11px;border-radius:50%;background:#000"></div>
<div class="a" style="left:596.1px;top:211.5px;width:14.6px;height:14.6px;border-radius:50%;border:1.4px solid #000"></div>
<div class="a" style="left:647px;top:211.7px;width:9.2px;height:9.2px;background:#000"></div>
<div class="cell" style="left:391px;top:245px"></div>
<div class="cell" style="left:439px;top:245px"></div>
<div class="cell" style="left:487px;top:245px"></div>
<div class="cell" style="left:535px;top:245px"></div>
<svg style="left:402px;top:257px" width="17" height="16" viewBox="0 0 17 16"><rect x="5" y="1" width="6" height="8" fill="#f7dc3c" opacity="0.85"/><rect x="0.5" y="6.5" width="7" height="5" fill="#ee5560" opacity="0.7"/><rect x="7.5" y="9.5" width="7" height="5" fill="#4a4ae8" opacity="0.8"/><path d="M8 0.5 V15.5 M2 10.5 H16" stroke="#111" stroke-width="1.2"/></svg>
<svg style="left:448px;top:253px" width="23" height="23" viewBox="0 0 23 23"><path d="M11.5 0.5 L15.8 4.8 L11.5 9.1 L7.2 4.8 Z M11.5 13.9 L15.8 18.2 L11.5 22.5 L7.2 18.2 Z M4.8 7.2 L9.1 11.5 L4.8 15.8 L0.5 11.5 Z M18.2 7.2 L22.5 11.5 L18.2 15.8 L13.9 11.5 Z" fill="#000"/></svg>
<svg style="left:496px;top:253px" width="22" height="23" viewBox="0 0 22 23"><path d="M1 0.8 L20.5 10.5 L8.5 11.5 Z" fill="#fff" stroke="#000" stroke-width="0.9" stroke-linejoin="round"/><path d="M20.5 10.5 L1.2 22.5 L8.5 11.5 Z" fill="#000"/></svg>
<svg style="left:545px;top:250px" width="23" height="23" viewBox="0 0 23 23"><path d="M0.5 12.5 Q3 11 5 13.5 L6.8 16.5 C10 9.5 14.5 4 22.5 0.5 C15.5 6 11 12 7.5 21.5 L6.5 21.8 C4.8 17.5 3 14.5 0.5 12.5 Z" fill="#000"/></svg>
<div class="a" style="left:387px;top:289.3px;width:288px;height:21.7px;background:#e8e8e8"></div>
<div class="a hd" style="left:396.5px;top:294.2px">Document Bullets</div>
<div class="cell" style="left:391px;top:315px"></div><div class="cell" style="left:439px;top:315px"></div>
<div class="a" style="left:407px;top:330.8px;width:8.8px;height:8.6px;background:#000"></div>
<svg style="left:445px;top:323px" width="29" height="23" viewBox="0 0 29 23"><rect x="1.5" y="1.5" width="26" height="20" fill="none" stroke="#000" stroke-width="3"/><path d="M8.1 5.4 L20.9 17.6 M20.9 5.4 L8.1 17.6" stroke="#000" stroke-width="1.5" stroke-linecap="round"/></svg>
<div class="a" style="left:387px;top:359px;width:305px;height:1px;background:#e2e2e2"></div>
<svg style="left:391px;top:367px" width="16" height="12" viewBox="0 0 16 12"><path d="M0.5 5.8 L4.5 2.3 V4.6 H9.5 V2.3 L13.5 5.8 L9.5 9.3 V7 H4.5 V9.3 Z" fill="#3f79b9"/><path d="M5.5 6 H8.5" stroke="#fff" stroke-width="0.8"/><path d="M5 1 H14 M4.5 10.8 H14 M12.2 5.8 H14" stroke="#666" stroke-width="1"/></svg>
<div class="a" style="left:419.2px;top:367.2px;font-size:12px;letter-spacing:-0.28px;color:#666">Change List Level</div>
<div class="a" style="left:419.2px;top:378px;width:8px;height:1px;background:#666"></div>
<svg style="left:679px;top:368px" width="5" height="8" viewBox="0 0 5 8"><path d="M0 0 L4.5 4 L0 8 Z" fill="#666"/></svg>
<div class="a" style="left:419.2px;top:390.8px;font-size:12px;color:#666;letter-spacing:-0.12px">Define New Bullet...</div>
<div class="a" style="left:419.2px;top:402px;width:8px;height:1px;background:#666"></div>
<svg style="left:682px;top:410px" width="8" height="8" viewBox="0 0 8 8"><rect x="5" y="1" width="2" height="2" fill="#8c8c8c"/><rect x="1" y="5" width="2" height="2" fill="#8c8c8c"/><rect x="5" y="5" width="2" height="2" fill="#8c8c8c"/></svg>
<svg style="left:496px;top:147px" width="18" height="48" viewBox="0 0 18 48"><rect x="7" y="0.5" width="4.2" height="24" fill="#e8343a"/><path d="M1 22.5 H17 L9.1 46.5 Z" fill="#e8343a"/></svg>
<div class="a" style="left:378px;top:68px;width:50px;height:38.2px;border:4.2px solid #ee3338;border-radius:4.5px"></div>
</body></html>
